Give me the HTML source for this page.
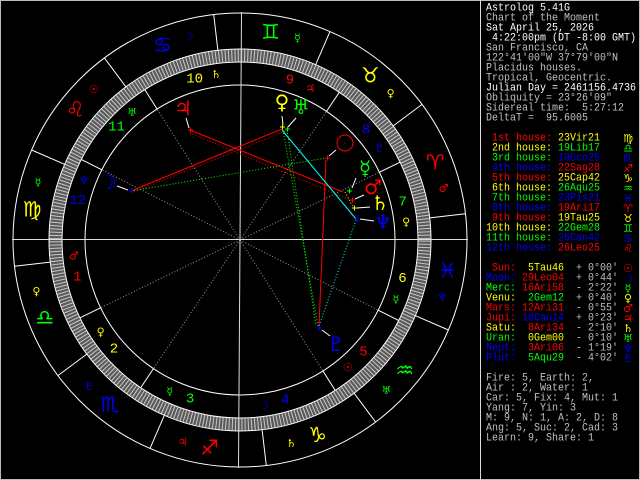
<!DOCTYPE html>
<html><head><meta charset="utf-8">
<style>
html,body{margin:0;padding:0;background:#000;}
#w{position:relative;width:640px;height:480px;overflow:hidden;background:#000;}
.t{position:absolute;left:486px;font-family:"Liberation Mono",monospace;font-size:10px;line-height:10px;white-space:pre;color:#c0c0c0;transform:scaleY(1.12);transform-origin:0 0;}
.g{position:absolute;left:622px;width:12px;text-align:center;font-family:"DejaVu Sans",sans-serif;font-size:11px;line-height:10px;}
.W{color:#fff}.R{color:#f00}.Y{color:#ff0}.G{color:#0f0}.B{color:#00f}
</style></head><body><div id="w">
<svg width="640" height="480" style="position:absolute;left:0;top:0" xmlns="http://www.w3.org/2000/svg">
<rect x="0.5" y="0.5" width="639" height="479" fill="none" stroke="#bbb"/>
<line x1="480.5" y1="0" x2="480.5" y2="480" stroke="#ddd"/>
<circle cx="240" cy="240" r="184.5" fill="none" stroke="#5a5a5a" stroke-width="12"/>
<circle cx="240" cy="240" r="184.5" fill="none" stroke="#c8c8c8" stroke-width="12" stroke-dasharray="1 2.2201" stroke-dashoffset="-0.63"/>
<g fill="none" stroke="#fff" stroke-width="1">
<circle cx="240" cy="240" r="227"/>
<circle cx="240" cy="240" r="191"/>
<circle cx="240" cy="240" r="178"/>
<circle cx="240" cy="240" r="155"/>
</g>
<g stroke="#fff" stroke-width="1">
<line x1="429.7" y1="217.9" x2="465.5" y2="213.7"/>
<line x1="393.2" y1="125.9" x2="422.1" y2="104.4"/>
<line x1="315.7" y1="64.6" x2="330.0" y2="31.6"/>
<line x1="217.9" y1="50.3" x2="213.7" y2="14.5"/>
<line x1="125.9" y1="86.8" x2="104.4" y2="57.9"/>
<line x1="64.6" y1="164.3" x2="31.6" y2="150.0"/>
<line x1="50.3" y1="262.1" x2="14.5" y2="266.3"/>
<line x1="86.8" y1="354.1" x2="57.9" y2="375.6"/>
<line x1="164.3" y1="415.4" x2="150.0" y2="448.4"/>
<line x1="262.1" y1="429.7" x2="266.3" y2="465.5"/>
<line x1="354.1" y1="393.2" x2="375.6" y2="422.1"/>
<line x1="415.4" y1="315.7" x2="448.4" y2="330.0"/>
<line x1="100.6" y1="307.8" x2="79.9" y2="317.8"/>
<line x1="153.5" y1="368.6" x2="140.7" y2="387.7"/>
<line x1="322.9" y1="370.9" x2="335.2" y2="390.4"/>
<line x1="378.2" y1="310.2" x2="398.7" y2="320.6"/>
<line x1="379.4" y1="172.2" x2="400.1" y2="162.2"/>
<line x1="326.5" y1="111.4" x2="339.3" y2="92.3"/>
<line x1="157.1" y1="109.1" x2="144.8" y2="89.6"/>
<line x1="101.8" y1="169.8" x2="81.3" y2="159.4"/>
</g>
<g stroke="#999" stroke-width="1" stroke-dasharray="1 2">
<line x1="240" y1="240" x2="100.6" y2="307.8"/>
<line x1="240" y1="240" x2="153.5" y2="368.6"/>
<line x1="240" y1="240" x2="322.9" y2="370.9"/>
<line x1="240" y1="240" x2="378.2" y2="310.2"/>
<line x1="240" y1="240" x2="379.4" y2="172.2"/>
<line x1="240" y1="240" x2="326.5" y2="111.4"/>
<line x1="240" y1="240" x2="157.1" y2="109.1"/>
<line x1="240" y1="240" x2="101.8" y2="169.8"/>
</g>
<g stroke="#ddd" stroke-width="1">
<line x1="12" y1="239.5" x2="468" y2="239.5"/>
<line x1="241.5" y1="12" x2="238.5" y2="468"/>
</g>
<g stroke-width="1" fill="none">
<line x1="131" y1="191" x2="282" y2="129" stroke="#f00"/>
<line x1="131" y1="193" x2="286" y2="131" stroke="#f00" stroke-dasharray="1 2"/>
<line x1="190" y1="130" x2="343" y2="192" stroke="#f00"/>
<line x1="190" y1="133" x2="350" y2="200" stroke="#f00" stroke-dasharray="1 2"/>
<line x1="326" y1="160" x2="319" y2="326" stroke="#f00"/>
<line x1="131" y1="191" x2="326" y2="158" stroke="#0f0" stroke-dasharray="1 2"/>
<line x1="283" y1="130" x2="318" y2="326" stroke="#0f0" stroke-dasharray="1 2"/>
<line x1="287" y1="130" x2="316" y2="326" stroke="#0f0" stroke-dasharray="1 2"/>
<line x1="282" y1="130" x2="356" y2="219" stroke="#0ff"/>
<line x1="356" y1="220" x2="319" y2="326" stroke="#0ff" stroke-dasharray="1 2"/>
<line x1="345" y1="192" x2="353" y2="207" stroke="#ff0" stroke-dasharray="1 2"/>
</g>
<g stroke="#fff" stroke-width="1">
<line x1="186" y1="118" x2="189" y2="128"/>
<line x1="117" y1="186" x2="128" y2="190"/>
<line x1="282" y1="116" x2="283" y2="125"/>
<line x1="296" y1="118" x2="288" y2="127"/>
<line x1="336" y1="150" x2="329" y2="156"/>
<line x1="356" y1="178" x2="352" y2="188"/>
<line x1="364" y1="195" x2="355" y2="199"/>
<line x1="370" y1="207" x2="357" y2="208"/>
<line x1="374" y1="221" x2="360" y2="219"/>
<line x1="330" y1="336" x2="322" y2="330"/>
</g>
<g stroke-width="1">
<path d="M188 130h5M190.5 127.5v5" stroke="#f00"/>
<path d="M129 191h5M131.5 188.5v5" stroke="#00f"/>
<path d="M280 127h5M282.5 124.5v5" stroke="#ff0"/>
<path d="M285 129h5M287.5 126.5v5" stroke="#0f0"/>
<path d="M325 158h5M327.5 155.5v5" stroke="#f00"/>
<path d="M347 191h5M349.5 188.5v5" stroke="#0f0"/>
<path d="M350 200h5M352.5 197.5v5" stroke="#f00"/>
<path d="M352 208h5M354.5 205.5v5" stroke="#ff0"/>
<path d="M355 219h5M357.5 216.5v5" stroke="#00f"/>
<path d="M317 328h5M319.5 325.5v5" stroke="#00f"/>
</g>
<circle cx="345" cy="143" r="8" fill="none" stroke="#f00"/>
<rect x="344.5" y="142.5" width="1" height="1" fill="#f00"/>
<g font-family="DejaVu Sans, sans-serif" font-size="21" text-anchor="middle" dominant-baseline="central">
<text x="435.2" y="162.5" fill="#f00">♈</text>
<text x="370.3" y="75.3" fill="#ff0">♉</text>
<text x="270.5" y="32.2" fill="#0f0">♊</text>
<text x="162.5" y="44.8" fill="#00f">♋</text>
<text x="75.3" y="109.7" fill="#f00">♌</text>
<text x="32.2" y="209.5" fill="#ff0">♍</text>
<text x="44.8" y="317.5" fill="#0f0">♎</text>
<text x="109.7" y="404.7" fill="#00f">♏</text>
<text x="209.5" y="447.8" fill="#f00">♐</text>
<text x="317.5" y="435.2" fill="#ff0">♑</text>
<text x="404.7" y="370.3" fill="#0f0">♒</text>
<text x="447.8" y="270.5" fill="#00f">♓</text>
</g>
<g font-family="DejaVu Sans, sans-serif" font-size="11" text-anchor="middle" dominant-baseline="central">
<text x="443.6" y="188.7" fill="#f00">♂</text>
<text x="390.7" y="93.7" fill="#ff0">♀</text>
<text x="297.4" y="38.0" fill="#0f0">☿</text>
<text x="188.7" y="36.4" fill="#00f">☽</text>
<text x="93.7" y="89.3" fill="#f00">☉</text>
<text x="38.0" y="182.6" fill="#0f0">☿</text>
<text x="36.4" y="291.3" fill="#ff0">♀</text>
<text x="89.3" y="386.3" fill="#00f">♇</text>
<text x="182.6" y="442.0" fill="#f00">♃</text>
<text x="291.3" y="443.6" fill="#ff0">♄</text>
<text x="386.3" y="390.7" fill="#0f0">♅</text>
<text x="442.0" y="297.4" fill="#00f">♆</text>
<text x="73.8" y="255.9" fill="#f00">♂</text>
<text x="100.7" y="332.2" fill="#ff0">♀</text>
<text x="169.7" y="391.5" fill="#0f0">☿</text>
<text x="263.9" y="405.3" fill="#00f">☽</text>
<text x="347.8" y="367.5" fill="#f00">☉</text>
<text x="395.9" y="299.7" fill="#0f0">☿</text>
<text x="406.2" y="222.1" fill="#ff0">♀</text>
<text x="379.3" y="147.8" fill="#00f">♇</text>
<text x="310.3" y="88.5" fill="#f00">♃</text>
<text x="216.1" y="74.7" fill="#ff0">♄</text>
<text x="132.2" y="112.5" fill="#0f0">♅</text>
<text x="84.1" y="180.3" fill="#00f">♆</text>
</g>
<g font-family="Liberation Mono, monospace" font-size="14" text-anchor="middle" dominant-baseline="central">
<text x="77.3" y="277.5" fill="#f00">1</text>
<text x="114.0" y="349.6" fill="#ff0">2</text>
<text x="190.1" y="399.4" fill="#0f0">3</text>
<text x="285.3" y="400.7" fill="#00f">4</text>
<text x="363.5" y="352.4" fill="#f00">5</text>
<text x="402.4" y="278.9" fill="#ff0">6</text>
<text x="402.7" y="202.5" fill="#0f0">7</text>
<text x="366.0" y="130.4" fill="#00f">8</text>
<text x="289.9" y="80.6" fill="#f00">9</text>
<text x="194.7" y="79.3" fill="#ff0">10</text>
<text x="116.5" y="127.6" fill="#0f0">11</text>
<text x="77.6" y="201.1" fill="#00f">12</text>
</g>
<g font-family="DejaVu Sans, sans-serif" font-size="20" text-anchor="middle" dominant-baseline="central">
<text x="183" y="108" fill="#f00">♃</text>
<text x="108" y="182" fill="#00f">☽</text>
<text x="282" y="102" fill="#ff0">♀</text>
<text x="301" y="107" fill="#0f0">♅</text>
<text x="365" y="168" fill="#0f0">☿</text>
<text x="373" y="187" fill="#f00">♂</text>
<text x="380" y="203" fill="#ff0">♄</text>
<text x="383" y="222" fill="#00f">♆</text>
<text x="336" y="344" fill="#00f">♇</text>
</g>
</svg>

<div class="t W" style="top:4px">Astrolog 5.41G</div>
<div class="t" style="top:14px">Chart of the Moment</div>
<div class="t W" style="top:24px">Sat April 25, 2026</div>
<div class="t W" style="top:34px"> 4:22:00pm (DT -8:00 GMT)</div>
<div class="t" style="top:44px">San Francisco, CA</div>
<div class="t" style="top:54px">122°41'00"W 37°79'00"N</div>
<div class="t" style="top:64px">Placidus houses.</div>
<div class="t" style="top:74px">Tropical, Geocentric.</div>
<div class="t W" style="top:84px">Julian Day = 2461156.4736</div>
<div class="t" style="top:94px">Obliquity = 23°26'09"</div>
<div class="t" style="top:104px">Sidereal time:  5:27:12</div>
<div class="t" style="top:114px">DeltaT =  95.6005</div>

<div class="t" style="top:134px"><span class="R"> 1st house:</span> <span class="Y">23Vir21</span></div>
<div class="t" style="top:144px"><span class="Y"> 2nd house:</span> <span class="G">19Lib17</span></div>
<div class="t" style="top:154px"><span class="G"> 3rd house:</span> <span class="B">19Sco25</span></div>
<div class="t" style="top:164px"><span class="B"> 4th house:</span> <span class="R">22Sag28</span></div>
<div class="t" style="top:174px"><span class="R"> 5th house:</span> <span class="Y">25Cap42</span></div>
<div class="t" style="top:184px"><span class="Y"> 6th house:</span> <span class="G">26Aqu25</span></div>
<div class="t" style="top:194px"><span class="G"> 7th house:</span> <span class="B">23Pis21</span></div>
<div class="t" style="top:204px"><span class="B"> 8th house:</span> <span class="R">19Ari17</span></div>
<div class="t" style="top:214px"><span class="R"> 9th house:</span> <span class="Y">19Tau25</span></div>
<div class="t" style="top:224px"><span class="Y">10th house:</span> <span class="G">22Gem28</span></div>
<div class="t" style="top:234px"><span class="G">11th house:</span> <span class="B">25Can42</span></div>
<div class="t" style="top:244px"><span class="B">12th house:</span> <span class="R">26Leo25</span></div>
<div class="g Y" style="top:134px">♍</div>
<div class="g G" style="top:144px">♎</div>
<div class="g B" style="top:154px">♏</div>
<div class="g R" style="top:164px">♐</div>
<div class="g Y" style="top:174px">♑</div>
<div class="g G" style="top:184px">♒</div>
<div class="g B" style="top:194px">♓</div>
<div class="g R" style="top:204px">♈</div>
<div class="g Y" style="top:214px">♉</div>
<div class="g G" style="top:224px">♊</div>
<div class="g B" style="top:234px">♋</div>
<div class="g R" style="top:244px">♌</div>

<div class="t" style="top:264px"><span class="R"> Sun:</span>  <span class="Y">5Tau46</span>  + 0°00'</div>
<div class="t" style="top:274px"><span class="B">Moon:</span> <span class="R">29Leo04</span>  + 0°44'</div>
<div class="t" style="top:284px"><span class="G">Merc:</span> <span class="R">16Ari58</span>  - 2°22'</div>
<div class="t" style="top:294px"><span class="Y">Venu:</span>  <span class="G">2Gem12</span>  + 0°40'</div>
<div class="t" style="top:304px"><span class="R">Mars:</span> <span class="R">12Ari31</span>  - 0°55'</div>
<div class="t" style="top:314px"><span class="R">Jupi:</span> <span class="B">18Can14</span>  + 0°23'</div>
<div class="t" style="top:324px"><span class="Y">Satu:</span>  <span class="R">8Ari34</span>  - 2°10'</div>
<div class="t" style="top:334px"><span class="G">Uran:</span>  <span class="Y">0Gem00</span>  - 0°10'</div>
<div class="t" style="top:344px"><span class="B">Nept:</span>  <span class="R">3Ari06</span>  - 1°19'</div>
<div class="t" style="top:354px"><span class="B">Plut:</span>  <span class="G">5Aqu29</span>  - 4°02'</div>
<div class="g R" style="top:264px">☉</div>
<div class="g B" style="top:274px">☽</div>
<div class="g G" style="top:284px">☿</div>
<div class="g Y" style="top:294px">♀</div>
<div class="g R" style="top:304px">♂</div>
<div class="g R" style="top:314px">♃</div>
<div class="g Y" style="top:324px">♄</div>
<div class="g G" style="top:334px">♅</div>
<div class="g B" style="top:344px">♆</div>
<div class="g B" style="top:354px">♇</div>

<div class="t" style="top:374px">Fire: 5, Earth: 2,</div>
<div class="t" style="top:384px">Air : 2, Water: 1</div>
<div class="t" style="top:394px">Car: 5, Fix: 4, Mut: 1</div>
<div class="t" style="top:404px">Yang: 7, Yin: 3</div>
<div class="t" style="top:414px">M: 9, N: 1, A: 2, D: 8</div>
<div class="t" style="top:424px">Ang: 5, Suc: 2, Cad: 3</div>
<div class="t" style="top:434px">Learn: 9, Share: 1</div>
</div></body></html>
